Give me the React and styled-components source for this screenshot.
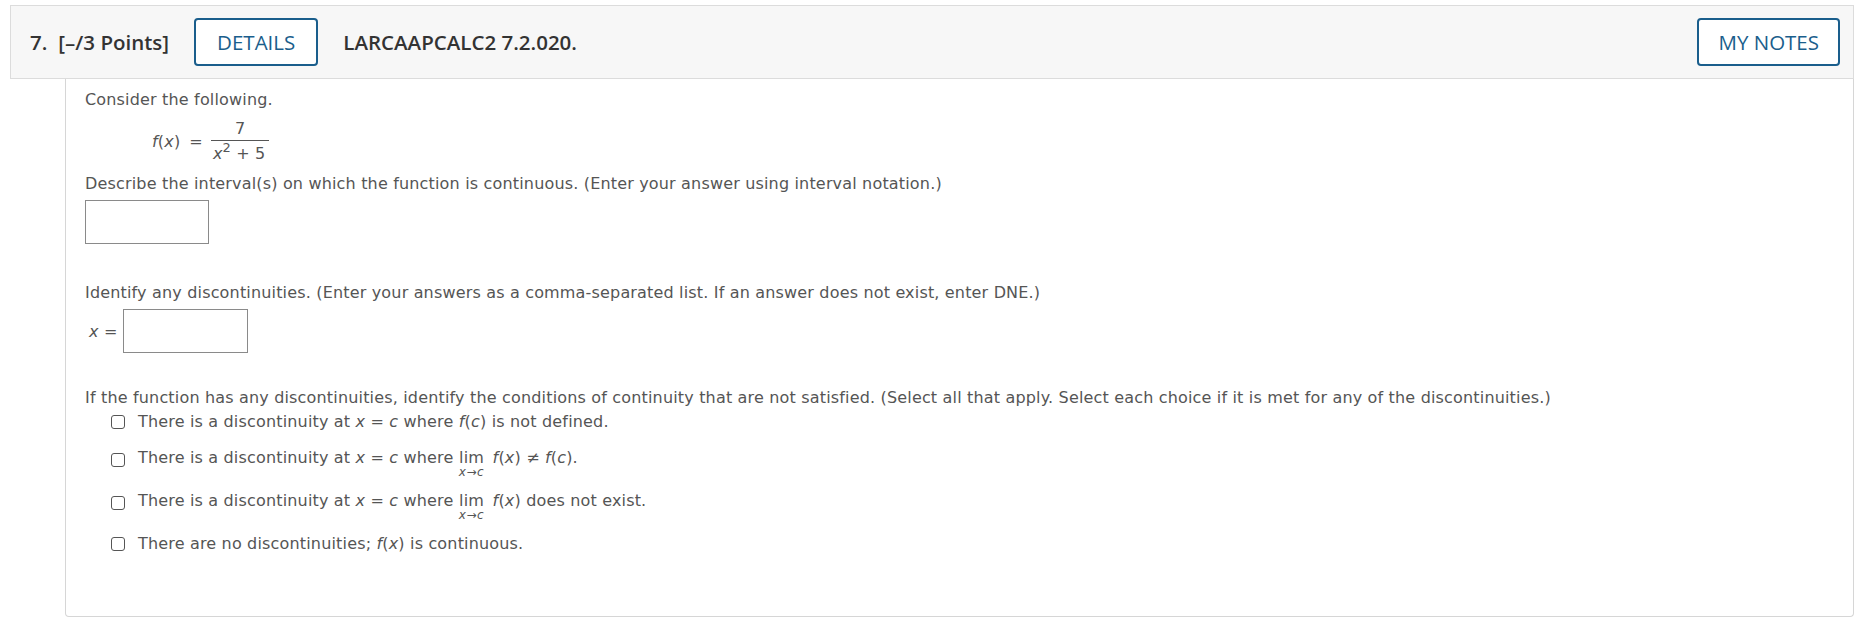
import React from 'react';
import styled, { createGlobalStyle } from 'styled-components';

const GlobalStyle = createGlobalStyle`
  html, body {
    margin: 0;
    padding: 0;
    background: #ffffff;
  }
  body {
    font-family: "DejaVu Sans", Verdana, sans-serif;
    color: #555555;
  }
`;

const Page = styled.div`
  width: 1868px;
  padding: 5px 14px 0 10px;
  box-sizing: border-box;
`;

const Header = styled.div`
  display: flex;
  align-items: center;
  height: 74px;
  box-sizing: border-box;
  padding: 0 13px 0 19px;
  background: #f7f7f7;
  border: 1px solid #dcdcdc;
  font-family: "Open Sans", sans-serif;
`;

const Number = styled.span`
  font-size: 20.5px;
  font-weight: 600;
  color: #333333;
  margin-right: 25px;
`;

const Index = styled.span`
  margin-right: 11px;
`;

const Code = styled.span`
  font-size: 20.5px;
  font-weight: 600;
  color: #333333;
  margin-left: 25px;
  flex: 1;
`;

const OutlineButton = styled.button`
  height: 48px;
  padding: 0 ${(p) => p.$pad || 21}px;
  border: 2px solid #1a5e8c;
  border-radius: 4px;
  background: #ffffff;
  color: #1a5e8c;
  font-family: "Open Sans", sans-serif;
  font-size: 20.5px;
  cursor: pointer;
`;

const Body = styled.div`
  margin-left: 55px;
  border: 1px solid #d6d6d6;
  border-top: none;
  border-radius: 0 0 4px 4px;
  height: 538px;
  box-sizing: border-box;
  padding: 10px 16px 0 19px;
  font-size: 16px;
  letter-spacing: 0.17px;
`;

const Para = styled.p`
  margin: ${(p) => p.$mt || 0}px 0 0 0;
  line-height: 22px;
`;

const Equation = styled.div`
  display: flex;
  align-items: center;
  margin: 7px 0 0 67px;
`;

const Italic = styled.i`
  font-style: italic;
`;

const Eq = styled.span`
  margin: 0 8px 0 9px;
`;

const Fraction = styled.span`
  display: inline-flex;
  flex-direction: column;
  align-items: stretch;
  text-align: center;
`;

const Numerator = styled.span`
  line-height: 21px;
  padding: 0 2px 1px;
  border-bottom: 1px solid #555555;
`;

const Denominator = styled.span`
  line-height: 22px;
  padding: 2px 4px 0 2px;
`;

const Sup = styled.sup`
  font-size: 13px;
  line-height: 0;
  vertical-align: 7px;
`;

const AnswerBox = styled.input`
  display: block;
  width: ${(p) => p.$w || 124}px;
  height: 44px;
  box-sizing: border-box;
  border: 1px solid #8a8a8a;
  border-radius: 0;
  margin: ${(p) => p.$mt || 0}px 0 0 0;
  outline: none;
`;

const AnswerRow = styled.div`
  display: flex;
  align-items: center;
  gap: 6px;
  margin-top: 5px;
  padding-left: 4px;
`;

const Options = styled.div`
  display: flex;
  flex-direction: column;
  margin: 2px 0 0 26px;
`;

const Option = styled.label`
  display: flex;
  align-items: flex-start;
  gap: 13px;
  margin-top: ${(p) => p.$mt || 0}px;
  line-height: 22px;
`;

const Box = styled.span`
  width: 14px;
  height: 14px;
  box-sizing: border-box;
  border: 1.5px solid #555555;
  border-radius: 3px;
  flex: none;
  margin-top: ${(p) => p.$mt || 4}px;
`;

const Lim = styled.span`
  display: inline-flex;
  flex-direction: column;
  align-items: center;
  vertical-align: top;
  margin: 0 3px 0 0;
`;

const LimSub = styled.span`
  font-size: 12px;
  line-height: 12px;
  margin-top: -3px;
  font-style: italic;
  letter-spacing: 0.6px;
`;

const Limit = () => (
  <Lim>
    <span>lim</span>
    <LimSub>x→c</LimSub>
  </Lim>
);

const App = () => {
  return (
    <>
      <GlobalStyle />
      <Page>
        <Header>
          <Number>
            <Index>7.</Index>[–/3 Points]
          </Number>
          <OutlineButton>DETAILS</OutlineButton>
          <Code>LARCAAPCALC2 7.2.020.</Code>
          <OutlineButton $pad={19}>MY NOTES</OutlineButton>
        </Header>
        <Body>
          <Para>Consider the following.</Para>
          <Equation>
            <span>
              <Italic>f</Italic>(<Italic>x</Italic>)
            </span>
            <Eq>=</Eq>
            <Fraction>
              <Numerator>7</Numerator>
              <Denominator>
                <Italic>x</Italic>
                <Sup>2</Sup> + 5
              </Denominator>
            </Fraction>
          </Equation>
          <Para $mt={8}>
            Describe the interval(s) on which the function is continuous. (Enter your answer using interval notation.)
          </Para>
          <AnswerBox $mt={5} />
          <Para $mt={38}>
            Identify any discontinuities. (Enter your answers as a comma-separated list. If an answer does not exist, enter DNE.)
          </Para>
          <AnswerRow>
            <span>
              <Italic>x</Italic> =
            </span>
            <AnswerBox $w={125} />
          </AnswerRow>
          <Para $mt={34}>
            If the function has any discontinuities, identify the conditions of continuity that are not satisfied. (Select all that apply. Select each choice if it is met for any of the discontinuities.)
          </Para>
          <Options>
            <Option>
              <Box />
              <span>
                There is a discontinuity at <Italic>x</Italic> = <Italic>c</Italic> where <Italic>f</Italic>(<Italic>c</Italic>) is not defined.
              </span>
            </Option>
            <Option $mt={14}>
              <Box $mt={6} />
              <span>
                There is a discontinuity at <Italic>x</Italic> = <Italic>c</Italic> where <Limit /> <Italic>f</Italic>(<Italic>x</Italic>) ≠ <Italic>f</Italic>(<Italic>c</Italic>).
              </span>
            </Option>
            <Option $mt={12}>
              <Box $mt={6} />
              <span>
                There is a discontinuity at <Italic>x</Italic> = <Italic>c</Italic> where <Limit /> <Italic>f</Italic>(<Italic>x</Italic>) does not exist.
              </span>
            </Option>
            <Option $mt={12}>
              <Box />
              <span>
                There are no discontinuities; <Italic>f</Italic>(<Italic>x</Italic>) is continuous.
              </span>
            </Option>
          </Options>
        </Body>
      </Page>
    </>
  );
};

export default App;
